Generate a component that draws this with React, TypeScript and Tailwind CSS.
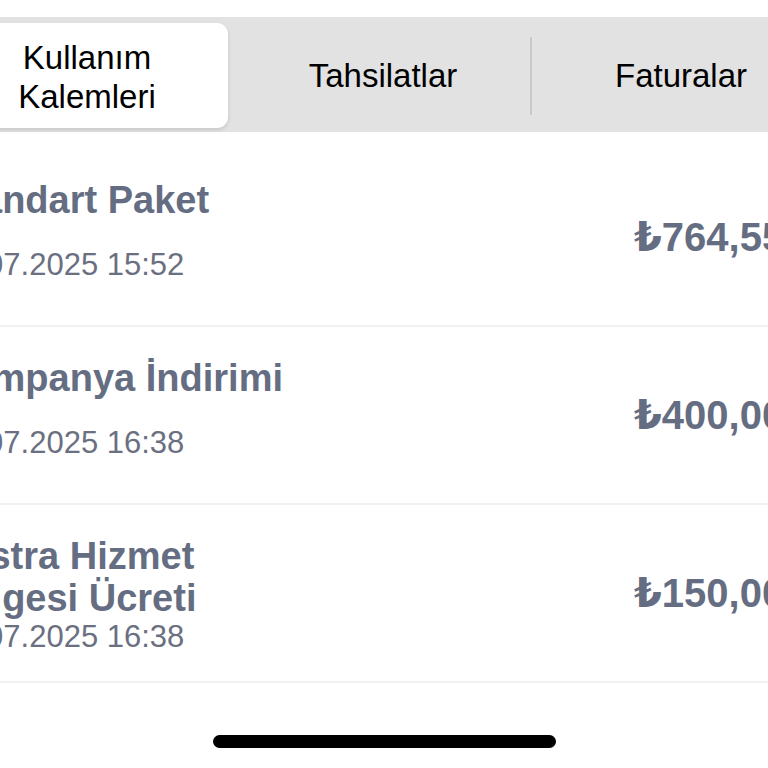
import React from "react";

type Item = { title: string; date: string; amount: string };

const items: Item[] = [
  { title: "Standart Paket", date: "01.07.2025 15:52", amount: "₺764,55" },
  { title: "Kampanya İndirimi", date: "01.07.2025 16:38", amount: "₺400,00" },
  { title: "Ekstra Hizmet Belgesi Ücreti", date: "01.07.2025 16:38", amount: "₺150,00" },
];

export default function App() {
  return (
    <div
      className="relative w-[768px] h-[768px] overflow-hidden bg-white"
      style={{ fontFamily: '"Liberation Sans", Arial, "DejaVu Sans", sans-serif' }}
    >
      <div className="pt-[17px]">
        <div className="-ml-[72px] flex items-stretch bg-[#e2e2e2] pl-[4px] pt-[6px] pb-[4px] h-[115px] w-[920px]">
          <div className="w-[296px] h-[105px] shrink-0 rounded-[11px] bg-white shadow-[0_2px_4px_rgba(0,0,0,0.12)] flex items-center justify-center pl-[14px]">
            <div className="text-[33px] leading-[39px] text-black text-center pt-[2px]">
              Kullanım
              <br />
              Kalemleri
            </div>
          </div>
          <div className="w-[302px] shrink-0 flex items-center justify-center pl-[8px]">
            <span className="text-[33px] text-black">Tahsilatlar</span>
          </div>
          <div className="w-[2px] shrink-0 self-center h-[78px] bg-[#c9c9c9]" />
          <div className="w-[298px] shrink-0 flex items-center justify-center">
            <span className="text-[33px] text-black">Faturalar</span>
          </div>
        </div>
      </div>

      <div className="pt-[17px]">
        {items.map((it, i) => (
          <div
            key={i}
            className="-ml-[57px] flex h-[178px] border-b-2 border-[#f1f1f3]"
          >
            <div className="flex-1 self-start pt-[30px]">
              <div className="h-[103px] flex flex-col justify-between">
                <div className="max-w-[350px] text-[38px] leading-[42px] font-bold text-[#656d82]">
                  {it.title}
                </div>
                <div className="text-[31px] leading-[35px] text-[#6b7081]">{it.date}</div>
              </div>
            </div>
            <div className="w-[134px] shrink-0 self-center whitespace-nowrap text-[40px] leading-[46px] font-bold text-[#656d82]">
              {it.amount}
            </div>
          </div>
        ))}
      </div>

      <div className="flex justify-center pt-[52px]">
        <div className="w-[343px] h-[13px] rounded-full bg-black" />
      </div>
    </div>
  );
}
